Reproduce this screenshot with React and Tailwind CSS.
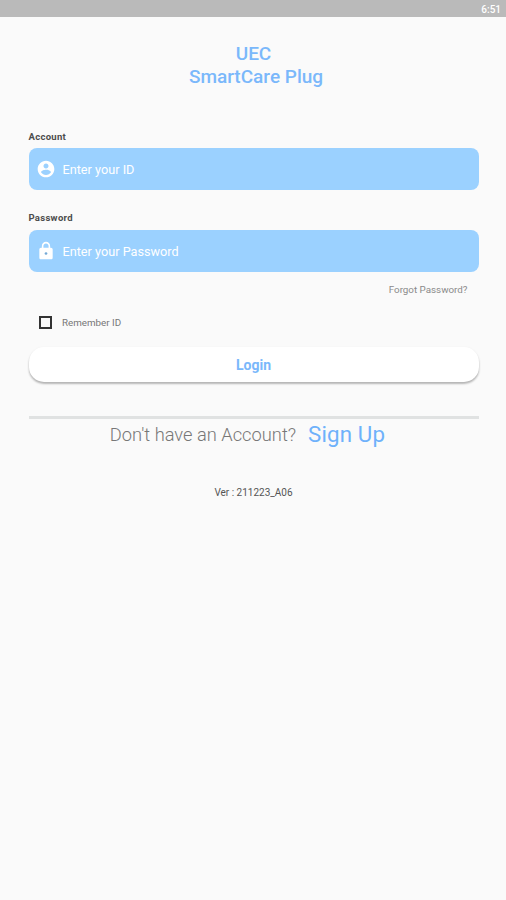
import { useState } from "react";

const AccountIcon = () => (
  <svg viewBox="0 0 24 24" className="w-5 h-5 shrink-0" fill="white">
    <path d="M12 2C6.48 2 2 6.48 2 12s4.480 10 10 10 10-4.480 10-10S17.520 2 12 2zm0 3.400c1.660 0 3 1.340 3 3s-1.340 3-3 3-3-1.340-3-3 1.340-3 3-3zm0 13.800c-2.500 0-4.710-1.280-6-3.220.03-1.990 4-3.080 6-3.080 1.990 0 5.970 1.090 6 3.080-1.290 1.940-3.500 3.220-6 3.220z" />
  </svg>
);

const LockIcon = () => (
  <svg viewBox="0 0 24 24" className="w-5 h-5 shrink-0" fill="white">
    <path d="M18 8h-1V6c0-2.760-2.240-5-5-5S7 3.240 7 6v2H6c-1.100 0-2 .9-2 2v10c0 1.100.9 2 2 2h12c1.100 0 2-.9 2-2V10c0-1.100-.9-2-2-2zM8.900 8V6c0-1.710 1.390-3.100 3.100-3.100s3.100 1.390 3.100 3.100v2z" />
    <circle cx="12" cy="15" r="1.600" fill="#75a9d6" />
  </svg>
);

export default function App() {
  const [account, setAccount] = useState("");
  const [password, setPassword] = useState("");
  const [remember, setRemember] = useState(false);

  return (
    <div className="min-h-screen bg-[#fafafa] font-['Roboto',sans-serif]">

      {/* Status bar */}
      <div className="h-[17px] bg-[#bababa] flex items-center justify-end pr-[5px] pt-0.5">
        <span className="text-[10px] leading-none font-medium text-white">6:51</span>
      </div>

      <div className="pl-[28.5px] pr-[27.5px] pt-[26px] flex flex-col">
        <h1 className="text-center text-[19px] leading-[22.5px] font-medium text-[#7ab8fb]">
          UEC
          <br />
          <span className="pl-[5px]">SmartCare Plug</span>
        </h1>

        {/* Account */}
        <label htmlFor="account" className="mt-[42px] h-3 text-[9.5px] leading-[13px] tracking-[0.3px] font-bold text-[#4c4c4c]">
          Account
        </label>
        <div className="mt-1.5 h-[42px] rounded-lg bg-[#9bd1ff] flex items-center pl-[7px] gap-[7px]">
          <AccountIcon />
          <input
            id="account"
            className="flex-1 pt-0.5 bg-transparent outline-none text-[12.7px] text-white placeholder:text-white"
            placeholder="Enter your ID"
            value={account}
            onChange={e => setAccount(e.target.value)}
          />
        </div>

        {/* Password */}
        <label htmlFor="password" className="mt-[21px] h-3 text-[9.5px] leading-[13px] tracking-[0.3px] font-bold text-[#4c4c4c]">
          Password
        </label>
        <div className="mt-[7px] h-[42px] rounded-lg bg-[#9bd1ff] flex items-center pl-[7px] gap-[7px]">
          <LockIcon />
          <input
            id="password"
            type="password"
            className="flex-1 pt-0.5 bg-transparent outline-none text-[12.7px] text-white placeholder:text-white"
            placeholder="Enter your Password"
            value={password}
            onChange={e => setPassword(e.target.value)}
          />
        </div>

        <button className="mt-3 mr-[11px] self-end text-[9.8px] leading-3 text-[#8a8a8a]">
          Forgot Password?
        </button>

        <label className="mt-[19px] ml-[10.5px] h-[14px] self-start flex items-center gap-2.5 text-[9.8px] leading-3 text-[#777]">
          <input
            type="checkbox"
            className="appearance-none w-[13px] h-[13px] border-2 border-[#333] checked:bg-[#333]"
            checked={remember}
            onChange={e => setRemember(e.target.checked)}
          />
          <span className="pt-px">Remember ID</span>
        </label>

        <button className="mt-[18px] h-[35px] rounded-[15px] bg-white shadow-[0_2px_2px_rgba(0,0,0,0.24),0_1px_3px_rgba(0,0,0,0.08)] text-sm font-bold text-[#7ab8fb]">
          Login
        </button>

        <hr className="mt-[34px] border-0 h-[3px] bg-[#e0e2e2]" />

        <div className="mt-0.5 pr-3 h-[27px] flex items-center justify-center gap-3">
          <span className="text-[18.3px] font-light text-[#777]">Don't have an Account?</span>
          <button className="text-[22.3px] leading-none tracking-[0.15px] text-[#6eb1fb]">Sign Up</button>
        </div>

        <p className="mt-[39px] text-center text-[10px] leading-3 text-[#555]">Ver : 211223_A06</p>
      </div>
    </div>
  );
}
